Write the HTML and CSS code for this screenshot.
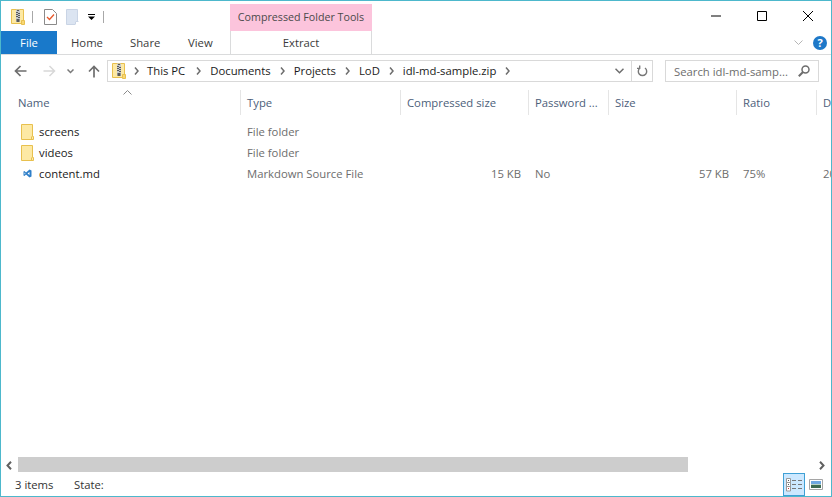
FILE: index.html
```html
<!DOCTYPE html>
<html lang="en">
<head>
	<meta charset="UTF-8">
	<title>idl-md-sample.zip</title>
	<link rel="stylesheet" href="styles.css">
</head>
<body>
	<svg class="defs" width="0" height="0">
		<symbol id="zip" viewBox="0 0 14 16">
			<path d="M.5.5h12v14H.5z" fill="#fde9a4" stroke="#e8c04e"/>
			<path d="M10.500 11.500h3v4h-3z" fill="#f8d775" stroke="#e8c04e"/>
			<path d="M5 .5h4v12H5z" fill="#c4c8cc"/>
			<path d="M6 1h2v1H6zM5 3h2v1H5zM7 4h2v1H7zM5 5h2v1H5zM7 6h2v1H7zM5 7h2v1H5zM7 8h2v1H7zM5.500 10h3v3h-3z" fill="#5a5a5a"/>
		</symbol>
		<symbol id="folder" viewBox="0 0 13 16">
			<path d="M.5.5h11v12h1v3H.5z" fill="#fde9a4" stroke="#e8c04e"/>
			<path d="M10.500 12.500v3" stroke="#e8c04e" fill="none"/>
		</symbol>
		<symbol id="crumb" viewBox="0 0 5 8">
			<path d="M1 .5 4 4 1 7.500" fill="none" stroke="#6d6d6d" stroke-width="1.500"/>
		</symbol>
	</svg>
	<div class="window">
		<div class="titlebar">
			<div class="qat">
				<svg class="ico-zip"><use href="#zip"/></svg>
				<span class="qat-sep"></span>
				<svg class="ico-props" viewBox="0 0 13 16">
					<path d="M.5.5h8l4 4v11H.5z" fill="#fff" stroke="#8a8a8a"/>
					<path d="M3 8l2.500 2.500L10 5.500" fill="none" stroke="#e8582a" stroke-width="1.300"/>
				</svg>
				<svg class="ico-new" viewBox="0 0 13 16">
					<path d="M.5.500h11v15H.5z" fill="#dbe4f1" stroke="#c9d4e5"/>
					<path d="M9 12h4v4H9z" fill="#fff"/>
					<path d="M9.500 15.500v-3h3" fill="none" stroke="#c9d4e5"/>
				</svg>
				<svg class="ico-drop" viewBox="0 0 7 7">
					<path d="M0 0h7v1H0zM0 2.500h7L3.500 6z" fill="#000"/>
				</svg>
				<span class="qat-sep"></span>
			</div>
			<div class="context-title">Compressed Folder Tools</div>
			<div class="caption">
				<svg viewBox="0 0 10 10"><path d="M0 5h10" stroke="#000"/></svg>
				<svg viewBox="0 0 10 10"><path d="M.5.500h9v9h-9z" fill="none" stroke="#000"/></svg>
				<svg viewBox="0 0 10 10"><path d="M0 0l10 10M10 0 0 10" stroke="#000"/></svg>
			</div>
		</div>
		<div class="tabs">
			<div class="tab-file">File</div>
			<div class="tab tab-home">Home</div>
			<div class="tab tab-share">Share</div>
			<div class="tab tab-view">View</div>
			<div class="tab-extract">Extract</div>
			<div class="tab-right">
				<svg class="ico-collapse" viewBox="0 0 9 5"><path d="M.5.500 4.500 4.500 8.500.5" fill="none" stroke="#b5b5b5"/></svg>
				<span class="help">?</span>
			</div>
		</div>
		<div class="navbar">
			<svg class="ico-nav" viewBox="0 0 13 12"><path d="M12.500 6H1.500M6.500 1l-5 5 5 5" fill="none" stroke="#6e6e6e" stroke-width="1.700"/></svg>
			<svg class="ico-nav ico-fwd" viewBox="0 0 13 12"><path d="M.5 6h11M6.500 1l5 5-5 5" fill="none" stroke="#d8d8d8" stroke-width="1.500"/></svg>
			<svg class="ico-recent" viewBox="0 0 7 5"><path d="M.5.500 3.500 3.500 6.500.5" fill="none" stroke="#7a7a7a" stroke-width="1.500"/></svg>
			<svg class="ico-nav ico-up" viewBox="0 0 12 13"><path d="M6 12.500V1.500M1 6.500l5-5 5 5" fill="none" stroke="#6e6e6e" stroke-width="1.700"/></svg>
			<div class="address">
				<svg class="ico-addr"><use href="#zip"/></svg>
				<svg class="crumb-sep"><use href="#crumb"/></svg>
				<span class="crumb crumb-first">This PC</span>
				<svg class="crumb-sep"><use href="#crumb"/></svg>
				<span class="crumb">Documents</span>
				<svg class="crumb-sep"><use href="#crumb"/></svg>
				<span class="crumb">Projects</span>
				<svg class="crumb-sep"><use href="#crumb"/></svg>
				<span class="crumb">LoD</span>
				<svg class="crumb-sep"><use href="#crumb"/></svg>
				<span class="crumb">idl-md-sample.zip</span>
				<svg class="crumb-sep"><use href="#crumb"/></svg>
				<span class="addr-drop">
					<svg viewBox="0 0 9 6"><path d="M.5.800 4.500 4.800 8.500.8" fill="none" stroke="#6d6d6d" stroke-width="1.500"/></svg>
				</span>
				<span class="addr-refresh">
					<svg viewBox="0 0 11 12"><path d="M3 3a4.200 4.200 0 1 0 5 0M2.700 .5V3.400H0" fill="none" stroke="#777" stroke-width="1.400"/></svg>
				</span>
			</div>
			<div class="search">
				<span>Search idl-md-samp...</span>
				<svg viewBox="0 0 12 12"><circle cx="7.500" cy="4.500" r="3.500" fill="none" stroke="#6d6d6d" stroke-width="1.500"/><path d="M5 7 .8 11.200" stroke="#6d6d6d" stroke-width="2"/></svg>
			</div>
		</div>
		<div class="content">
			<div class="columns">
				<div class="col col-name">Name<svg class="sort" viewBox="0 0 9 5"><path d="M.5 4.500 4.500.5l4 4" fill="none" stroke="#8a8a8a"/></svg></div>
				<div class="col">Type</div>
				<div class="col">Compressed size</div>
				<div class="col">Password ...</div>
				<div class="col">Size</div>
				<div class="col">Ratio</div>
				<div class="col col-last">Date</div>
			</div>
			<div class="files">
				<div class="row">
					<div class="cell-name"><svg class="ico-folder"><use href="#folder"/></svg>screens</div>
					<div class="cell">File folder</div>
				</div>
				<div class="row">
					<div class="cell-name"><svg class="ico-folder"><use href="#folder"/></svg>videos</div>
					<div class="cell">File folder</div>
				</div>
				<div class="row">
					<div class="cell-name"><svg class="ico-md" viewBox="0 0 9 9"><path d="M6.500.5 8.500 1.500v6l-2 1L3 5.500 1.500 7 .5 6.500v-4l1-.5L3 3.500z" fill="#2e7fc9"/><path d="M1.500 3.500v2L2.500 4.500zM6.500 3 4.500 4.500l2 1.500z" fill="#fff"/></svg>content.md</div>
					<div class="cell">Markdown Source File</div>
					<div class="cell cell-num">15 KB</div>
					<div class="cell">No</div>
					<div class="cell cell-num">57 KB</div>
					<div class="cell">75%</div>
					<div class="cell">2018</div>
				</div>
			</div>
			<div class="hscroll">
				<svg class="scroll-arrow" viewBox="0 0 6 9"><path d="M5 .8 1.500 4.500 5 8.200" fill="none" stroke="#606060" stroke-width="2"/></svg>
				<div class="scroll-track"><div class="scroll-thumb"></div></div>
				<svg class="scroll-arrow" viewBox="0 0 6 9"><path d="M1 .8 4.500 4.500 1 8.200" fill="none" stroke="#606060" stroke-width="2"/></svg>
			</div>
		</div>
		<div class="statusbar">
			<span class="status-count">3 items</span>
			<span>State:</span>
			<div class="views">
				<div class="view-btn view-on">
					<svg viewBox="0 0 17 14">
						<path d="M.5.500h4v4h-4zM.5 4.500h4v4h-4zM.5 8.500h4v4.500h-4z" fill="#fff" stroke="#999"/>
						<path d="M2 2h1v1H2zM2 6h1v1H2z" fill="#555"/><path d="M2 10h1v1H2z" fill="#c33"/>
						<path d="M6 2.500h4M12 2.500h4M6 6.500h4M12 6.500h4M6 10.500h4M12 10.500h4" stroke="#777"/>
					</svg>
				</div>
				<div class="view-btn view-large">
					<svg viewBox="0 0 14 11">
						<path d="M.5.500h13v10H.5z" fill="#fff" stroke="#a5a5a5"/>
						<path d="M2 2h10v3H2z" fill="#6fa8e0"/><path d="M2 5h10v1H2z" fill="#b9d3c4"/><path d="M2 6h10v3H2z" fill="#3d6a50"/>
					</svg>
				</div>
			</div>
		</div>
	</div>
</body>
</html>
```

FILE: styles.css
```css
html, body {
	height: 100%;
	margin: 0;
	padding: 0;
}
body {
	font-family: "Open Sans", "Noto Sans", sans-serif;
	font-size: 11.3px;
	color: #1e1e1e;
	background: #fff;
	overflow: hidden;
}
.defs {
	position: absolute;
}
.window {
	box-sizing: border-box;
	height: 497px;
	border: 1px solid #4db8cc;
	display: flex;
	flex-direction: column;
	overflow: hidden;
}

/* title bar */
.titlebar {
	height: 30px;
	display: flex;
}
.qat {
	width: 229px;
	display: flex;
	align-items: center;
	padding: 1px 0 0 10px;
	box-sizing: border-box;
}
.qat-sep {
	width: 1px;
	height: 12px;
	background: #a8a8a8;
}
.ico-zip {
	width: 14px;
	height: 16px;
	margin-right: 7px;
}
.ico-props {
	width: 13px;
	height: 16px;
	margin-left: 11px;
}
.ico-new {
	width: 13px;
	height: 16px;
	margin-left: 9px;
}
.ico-drop {
	width: 7px;
	height: 7px;
	margin: 2px 8px 0 9px;
}
.context-title {
	width: 142px;
	margin-top: 3px;
	background: #fcc4dc;
	color: #4a4a4a;
	font-size: 10.7px;
	text-align: center;
	line-height: 27px;
}
.caption {
	flex: 1;
	display: flex;
	justify-content: flex-end;
	padding: 10px 18px 0 0;
	gap: 36px;
}
.caption svg {
	width: 10px;
	height: 10px;
}

/* ribbon tabs */
.tabs {
	height: 23px;
	border-bottom: 1px solid #dadbdc;
	display: flex;
	line-height: 23px;
}
.tab-file {
	width: 56px;
	background: #1979ca;
	color: #fff;
	text-align: center;
}
.tab {
	color: #3b3b3b;
}
.tab-home {
	margin-left: 14px;
	width: 59px;
}
.tab-share {
	width: 58px;
}
.tab-view {
	width: 42px;
}
.tab-extract {
	width: 140px;
	border-left: 1px solid #dadbdc;
	border-right: 1px solid #dadbdc;
	text-align: center;
	color: #3b3b3b;
}
.tab-right {
	flex: 1;
	display: flex;
	justify-content: flex-end;
	align-items: center;
	padding-right: 4px;
}
.ico-collapse {
	width: 9px;
	height: 5px;
	margin-right: 10px;
}
.help {
	width: 14px;
	height: 14px;
	border-radius: 50%;
	background: #1e78c8;
	color: #fff;
	font-weight: 700;
	font-size: 11px;
	line-height: 14px;
	text-align: center;
}

/* nav */
.navbar {
	height: 35px;
	display: flex;
	align-items: center;
	box-sizing: border-box;
	padding: 0 12px 3px 13px;
}
.ico-nav {
	width: 13px;
	height: 12px;
}
.ico-fwd {
	margin-left: 16px;
}
.ico-recent {
	width: 7px;
	height: 5px;
	margin-left: 11px;
}
.ico-up {
	margin-left: 14px;
	width: 12px;
	height: 13px;
}
.address {
	margin-left: 7px;
	width: 546px;
	height: 22px;
	box-sizing: border-box;
	border: 1px solid #d9d9d9;
	display: flex;
	align-items: center;
	padding-left: 4px;
	line-height: 18px;
}
.ico-addr {
	width: 14px;
	height: 16px;
	margin-right: -1px;
}
.crumb-sep {
	width: 5px;
	height: 8px;
	margin: 0 9px 0 9px;
	flex: none;
}
.crumb {
	color: #1a1a1a;
}
.crumb-first {
	margin: 0 2px 0 -1px;
}
.addr-drop {
	margin-left: auto;
	width: 23px;
	height: 20px;
	display: flex;
	align-items: center;
	justify-content: center;
	border-right: 1px solid #d9d9d9;
}
.addr-drop svg {
	width: 9px;
	height: 6px;
}
.addr-refresh {
	width: 20px;
	display: flex;
	justify-content: center;
}
.addr-refresh svg {
	width: 11px;
	height: 12px;
}
.search {
	margin-left: 12px;
	width: 154px;
	height: 22px;
	box-sizing: border-box;
	border: 1px solid #d9d9d9;
	display: flex;
	align-items: center;
	justify-content: space-between;
	padding: 0 8px 0 8px;
	color: #6d6d6d;
}
.search svg {
	width: 12px;
	height: 12px;
}

/* file list */
.content {
	flex: 1;
	display: flex;
	flex-direction: column;
	min-height: 0;
}
.columns, .row {
	display: grid;
	grid-template-columns: 239px 160px 128px 80px 128px 80px 100px;
	width: 915px;
}
.columns {
	height: 25px;
	line-height: 25px;
	color: #4c607a;
}
.col {
	border-left: 1px solid #e5e5e5;
	padding-left: 6px;
	white-space: nowrap;
	overflow: hidden;
}
.col-name {
	border-left: 0;
	padding-left: 17px;
	position: relative;
	overflow: visible;
}
.sort {
	position: absolute;
	left: 122px;
	top: 0;
	width: 9px;
	height: 5px;
}
.files {
	flex: 1;
	padding-top: 6px;
}
.row {
	height: 21px;
	line-height: 21px;
}
.cell-name {
	display: flex;
	align-items: center;
	padding-left: 20px;
	color: #1a1a1a;
}
.ico-folder {
	width: 13px;
	height: 16px;
	margin-right: 5px;
}
.ico-md {
	width: 9px;
	height: 9px;
	margin: 0 7px 0 2px;
}
.cell {
	padding-left: 7px;
	color: #6d6d6d;
}
.cell-num {
	padding: 0 7px 0 0;
	text-align: right;
}
.hscroll {
	height: 16px;
	display: flex;
	align-items: flex-start;
}
.scroll-arrow {
	width: 6px;
	height: 9px;
	margin: 4px 6px 0 5px;
	flex: none;
}
.scroll-track {
	flex: 1;
	height: 15px;
}
.scroll-thumb {
	width: 670px;
	height: 15px;
	background: #cdcdcd;
}

/* status bar */
.statusbar {
	height: 23px;
	display: flex;
	align-items: center;
	padding-left: 14px;
	color: #333;
}
.status-count {
	width: 59px;
}
.views {
	margin-left: auto;
	display: flex;
	padding-right: 6px;
	gap: 2px;
	height: 100%;
}
.view-btn {
	width: 22px;
	box-sizing: border-box;
	display: flex;
	align-items: center;
	justify-content: center;
}
.view-large {
	width: 18px;
}
.view-large svg {
	width: 14px;
	height: 11px;
}
.view-on {
	background: #cce8ff;
	border: 1px solid #3fa0d5;
}
.view-on svg {
	width: 17px;
	height: 14px;
}
```
